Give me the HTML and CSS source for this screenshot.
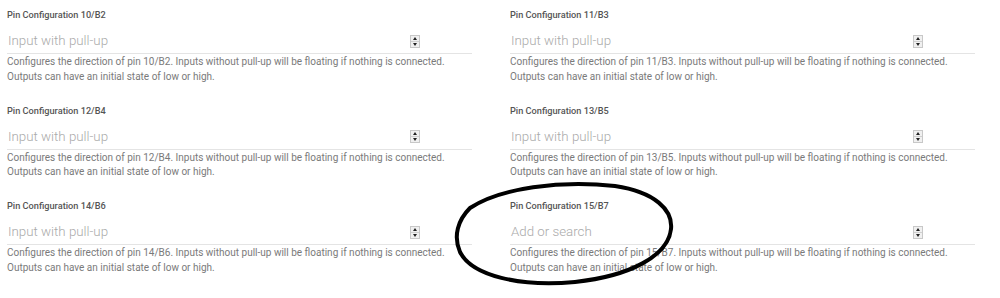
FILE: index.html
```html
<!DOCTYPE html>
<html>
<head>
<meta charset="utf-8">
<link rel="stylesheet" href="styles.css">
</head>
<body>
<div class="page">
  <div class="grid">
    <div class="field">
      <div class="label">Pin Configuration 10/B2</div>
      <div class="select"><span class="value">Input with pull-up</span><span class="spin"><i class="up"></i><i class="down"></i></span></div>
      <div class="desc">Configures the direction of pin 10/B2. Inputs without pull-up will be floating if nothing is connected.<br>Outputs can have an initial state of low or high.</div>
    </div>
    <div class="field">
      <div class="label">Pin Configuration 11/B3</div>
      <div class="select"><span class="value">Input with pull-up</span><span class="spin"><i class="up"></i><i class="down"></i></span></div>
      <div class="desc">Configures the direction of pin 11/B3. Inputs without pull-up will be floating if nothing is connected.<br>Outputs can have an initial state of low or high.</div>
    </div>
    <div class="field">
      <div class="label">Pin Configuration 12/B4</div>
      <div class="select"><span class="value">Input with pull-up</span><span class="spin"><i class="up"></i><i class="down"></i></span></div>
      <div class="desc">Configures the direction of pin 12/B4. Inputs without pull-up will be floating if nothing is connected.<br>Outputs can have an initial state of low or high.</div>
    </div>
    <div class="field">
      <div class="label">Pin Configuration 13/B5</div>
      <div class="select"><span class="value">Input with pull-up</span><span class="spin"><i class="up"></i><i class="down"></i></span></div>
      <div class="desc">Configures the direction of pin 13/B5. Inputs without pull-up will be floating if nothing is connected.<br>Outputs can have an initial state of low or high.</div>
    </div>
    <div class="field">
      <div class="label">Pin Configuration 14/B6</div>
      <div class="select"><span class="value">Input with pull-up</span><span class="spin"><i class="up"></i><i class="down"></i></span></div>
      <div class="desc">Configures the direction of pin 14/B6. Inputs without pull-up will be floating if nothing is connected.<br>Outputs can have an initial state of low or high.</div>
    </div>
    <div class="field">
      <div class="label">Pin Configuration 15/B7</div>
      <div class="select"><span class="value">Add or search</span><span class="spin"><i class="up"></i><i class="down"></i></span></div>
      <div class="desc">Configures the direction of pin 15/B7. Inputs without pull-up will be floating if nothing is connected.<br>Outputs can have an initial state of low or high.</div>
    </div>
  </div>
  <svg class="mark" width="1000" height="298" viewBox="0 0 1000 298">
    <path d="M470 208 C 500 188, 560 180, 615 186 C 655 192, 673 210, 671 229 C 668 256, 630 276, 575 282 C 520 287, 472 276, 460 252 C 453 236, 458 220, 470 208 Z" fill="none" stroke="#000" stroke-width="4"/>
  </svg>
</div>
</body>
</html>
```
FILE: styles.css
```css
html, body {
  margin: 0;
  padding: 0;
  background: #fff;
}
.page {
  position: relative;
  width: 1000px;
  height: 298px;
  overflow: hidden;
  font-family: Roboto, "Liberation Sans", sans-serif;
}
.grid {
  display: grid;
  grid-template-columns: 465px 465px;
  column-gap: 38px;
  row-gap: 19.5px;
  padding: 8px 0 0 7px;
}
.label {
  font-size: 9.2px;
  font-weight: 500;
  color: #555;
  line-height: 13px;
  height: 13px;
}
.select {
  display: flex;
  align-items: center;
  justify-content: space-between;
  padding: 11px 0 3px 1px;
  box-sizing: border-box;
  height: 33px;
  border-bottom: 1px solid #e4e4e4;
}
.value {
  font-size: 13.3px;
  font-weight: 300;
  color: #aaa;
  line-height: 18px;
}
.spin {
  display: flex;
  flex-direction: column;
  width: 10px;
  height: 13px;
  margin-right: 52px;
  border: 1px solid #c8c8c8;
  background: #f0f0f0;
  box-sizing: border-box;
}
.spin i {
  flex: 1;
  display: flex;
  align-items: center;
  justify-content: center;
}
.spin .up {
  border-bottom: 1px solid #d0d0d0;
}
.spin .up::before {
  content: "";
  border-left: 2px solid transparent;
  border-right: 2px solid transparent;
  border-bottom: 3px solid #222;
}
.spin .down::before {
  content: "";
  border-left: 2px solid transparent;
  border-right: 2px solid transparent;
  border-top: 3px solid #222;
}
.desc {
  margin-top: 1px;
  font-size: 10px;
  line-height: 14.5px;
  color: #7a7a7a;
  white-space: nowrap;
}
.mark {
  position: absolute;
  left: 0;
  top: 0;
  pointer-events: none;
}
```
